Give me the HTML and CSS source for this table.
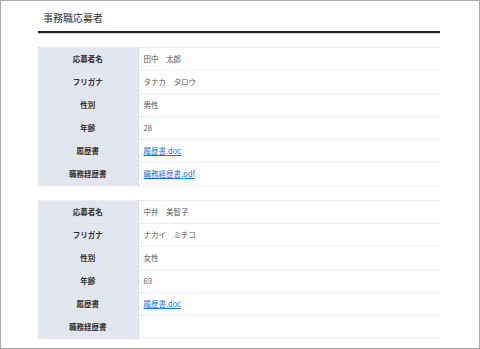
FILE: index.html
```html
<!DOCTYPE html>
<html lang="ja">

<head>
    <meta charset="UTF-8">
    <title>事務職応募者</title>
    <link rel="stylesheet" href="styles.css">
</head>

<body>
    <div class="page">
        <h1 class="page-title">事務職応募者</h1>

        <table class="applicant">
            <tr><th>応募者名</th><td>田中　太郎</td></tr>
            <tr><th>フリガナ</th><td>タナカ　タロウ</td></tr>
            <tr><th>性別</th><td>男性</td></tr>
            <tr><th>年齢</th><td>28</td></tr>
            <tr><th>履歴書</th><td><a href="#">履歴書.doc</a></td></tr>
            <tr><th>職務経歴書</th><td><a href="#">職務経歴書.pdf</a></td></tr>
        </table>

        <table class="applicant">
            <tr><th>応募者名</th><td>中井　美智子</td></tr>
            <tr><th>フリガナ</th><td>ナカイ　ミチコ</td></tr>
            <tr><th>性別</th><td>女性</td></tr>
            <tr><th>年齢</th><td>69</td></tr>
            <tr><th>履歴書</th><td><a href="#">履歴書.doc</a></td></tr>
            <tr><th>職務経歴書</th><td></td></tr>
        </table>
    </div>
</body>

</html>
```

FILE: styles.css
```css
:root {
    --color-frame: #aaaaaa;
    --color-text: #333333;
    --color-value: #555555;
    --color-label-bg: #e2e6ee;
    --color-rule: #dcdcdc;
    --color-link: #1a6fd8;
}

* {
    margin: 0;
    padding: 0;
    box-sizing: border-box;
}

html,
body {
    height: 100%;
}

body {
    border: 1px solid var(--color-frame);
    background: #ffffff;
    color: var(--color-text);
    font-family: "Noto Sans CJK JP", "Noto Sans", sans-serif;
    overflow: hidden;
}

.page {
    width: 402px;
    margin-left: 37px;
}

.page-title {
    font-size: 10px;
    font-weight: normal;
    line-height: 14px;
    padding: 10px 5px 6px;
    border-bottom: 2px solid #222222;
    box-shadow: 0 1px 0 #dddddd;
    margin-bottom: 14px;
}

.applicant {
    width: 100%;
    border-collapse: collapse;
    border-top: 1px dotted var(--color-rule);
    margin-bottom: 14px;
}

.applicant th,
.applicant td {
    height: 23px;
    border-bottom: 1px dotted var(--color-rule);
    font-size: 7.5px;
    line-height: 10px;
    vertical-align: middle;
}

.applicant th {
    width: 100px;
    background-color: var(--color-label-bg);
    border-right: 1px solid #d6dae2;
    text-align: center;
    font-weight: bold;
    color: var(--color-text);
}

.applicant td {
    padding-left: 5px;
    color: var(--color-value);
}

.applicant a {
    color: var(--color-link);
    text-decoration: underline;
}
```
